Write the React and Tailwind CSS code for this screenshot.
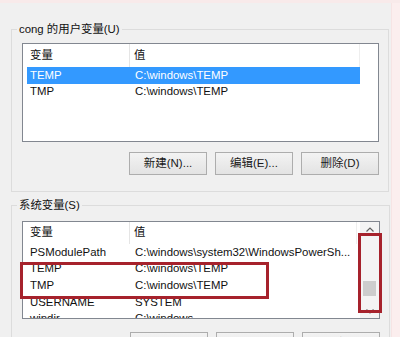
import React from 'react';

const font = { fontFamily: '"Liberation Sans", "Noto Sans CJK SC", sans-serif' };

const userVars = [
  { name: 'TEMP', value: 'C:\\windows\\TEMP', selected: true },
  { name: 'TMP', value: 'C:\\windows\\TEMP' },
];

const sysVars = [
  { name: 'PSModulePath', value: 'C:\\windows\\system32\\WindowsPowerSh...' },
  { name: 'TEMP', value: 'C:\\windows\\TEMP' },
  { name: 'TMP', value: 'C:\\windows\\TEMP' },
  { name: 'USERNAME', value: 'SYSTEM' },
  { name: 'windir', value: 'C:\\windows' },
];

const Header = ({ height, width }) => (
  <div className={`flex bg-white ${height}`}>
    <div className="w-[107px] shrink-0 pl-[7px] flex items-center border-r border-[#e5e5e5]">变量</div>
    <div className={`${width} shrink-0 pl-[4px] flex items-center border-r border-[#eeeeee]`}>值</div>
  </div>
);

const Row = ({ item }) => (
  <div
    className={`ml-[4px] w-[333px] h-[16.6px] flex items-center whitespace-nowrap ${
      item.selected ? 'bg-[#3399ff] text-white' : ''
    }`}
  >
    <div className="w-[103px] shrink-0 pl-[3px]">{item.name}</div>
    <div className="pl-[5px]">{item.value}</div>
  </div>
);

const Buttons = ({ className }) => (
  <div className={`flex justify-end gap-[8px] ${className}`}>
    {['新建(N)...', '编辑(E)...', '删除(D)'].map((label) => (
      <button
        key={label}
        className="w-[78px] h-[23px] border border-[#adadad] bg-gradient-to-b from-[#f3f3f3] to-[#e3e3e3] text-[11.5px] text-[#1a1a1a]"
      >
        {label}
      </button>
    ))}
  </div>
);

const Chevron = ({ up }) => (
  <svg width="8" height="5" viewBox="0 0 8 5">
    <path d={up ? 'M0.5 4.5 L4 1 L7.5 4.5' : 'M0.5 0.5 L4 4 L7.5 0.5'} fill="none" stroke="#606060" strokeWidth="1.2" />
  </svg>
);

export default function App() {
  return (
    <div className="w-[400px] h-[337px] overflow-hidden bg-[#fbeeee] flex flex-col text-[11.4px] text-[#111]" style={font}>
      <div className="h-[3px] shrink-0 bg-[#f8eaea]" />
      <div className="flex flex-1 min-h-0">
        <div className="w-[392px] bg-[#f0f0f0] pt-[18px] pl-[11px] border-r border-[#f6e4e4]">
          {/* 用户变量 */}
          <fieldset className="w-[378px] h-[171px] border border-[#dcdcdc] m-0 p-0">
            <legend className="ml-[5px] px-[2px] leading-[16px]">cong 的用户变量(U)</legend>
            <div className="pt-[6px] pl-[10px] pr-[9px]">
              <div className="h-[99px] border border-[#828790] bg-white overflow-hidden">
                <Header height="h-[23px]" width="w-[230px]" />
                {userVars.map((v) => (
                  <Row key={v.name} item={v} />
                ))}
              </div>
              <Buttons className="mt-[10px]" />
            </div>
          </fieldset>

          {/* 系统变量 */}
          <fieldset className="w-[378px] mt-[5px] border border-[#dcdcdc] m-0 p-0">
            <legend className="ml-[5px] px-[2px] leading-[16px]">系统变量(S)</legend>
            <div className="pt-[8px] pl-[10px] pr-[9px]">
              <div className="relative h-[98px] border border-[#828790] bg-white">
                <div className="flex h-full">
                  <div className="flex-1 overflow-hidden">
                    <Header height="h-[22px]" width="w-[227px]" />
                    {sysVars.map((v) => (
                      <Row key={v.name} item={v} />
                    ))}
                  </div>
                  <div className="w-[19px] shrink-0 bg-[#f4f4f4] flex flex-col items-center">
                    <div className="h-[14px] flex items-center justify-center"><Chevron up /></div>
                    <div className="flex-1 w-full px-[3px] flex flex-col">
                      <div className="h-[45px]" />
                      <div className="h-[15px] bg-[#cdcdcd]" />
                    </div>
                    <div className="h-[14px] flex items-center justify-center"><Chevron /></div>
                  </div>
                </div>
                <div className="absolute left-[-3px] top-[40px] w-[249px] h-[37px] border-[3px] border-[#a6222c]" />
                <div className="absolute left-[335px] top-[11px] w-[24px] h-[80px] border-[3px] border-[#a6222c]" />
              </div>
              <Buttons className="mt-[13px]" />
            </div>
          </fieldset>
        </div>
      </div>
    </div>
  );
}
